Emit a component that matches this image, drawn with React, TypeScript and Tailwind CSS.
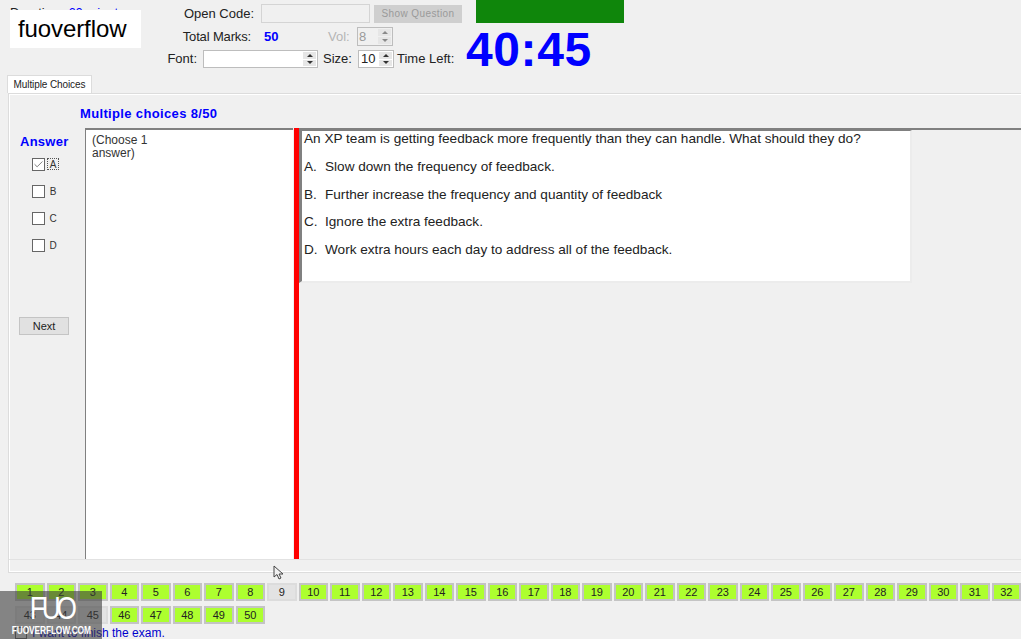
import { Check } from 'lucide-react';

const choices = [
    'Slow down the frequency of feedback.',
    'Further increase the frequency and quantity of feedback',
    'Ignore the extra feedback.',
    'Work extra hours each day to address all of the feedback.',
];

const firstRow = Array.from({ length: 32 }, (_, i) => i + 1);
const secondRow = [43, 44, 45, 46, 47, 48, 49, 50];
// questions not answered yet stay grey
const unanswered = [9, 43, 44, 45];

function Spinner({ disabled }: { disabled?: boolean }) {
    const arrow = disabled ? 'text-[#8a8a8a]' : 'text-[#333]';
    return (
        <div className="flex w-[15px] flex-col gap-px self-stretch p-px">
            <div className="flex flex-1 items-center justify-center bg-[#e6e6e6]">
                <div className={`h-0 w-0 border-x-[3px] border-b-[3px] border-x-transparent border-b-current ${arrow}`}></div>
            </div>
            <div className="flex flex-1 items-center justify-center bg-[#e6e6e6]">
                <div className={`h-0 w-0 border-x-[3px] border-t-[3px] border-x-transparent border-t-current ${arrow}`}></div>
            </div>
        </div>
    );
}

function QuestionButton({ n }: { n: number }) {
    const done = !unanswered.includes(n);
    return (
        <div className={`flex h-[18px] w-[29.5px] shrink-0 items-center justify-center border-2 text-[11px] text-[#222] ${done ? 'border-[#c4c4c4] bg-[#adff2f]' : 'border-[#dcdcdc] bg-[#e3e3e3]'}`}>
            {n}
        </div>
    );
}

export default function App() {
    return (
        <div className="relative flex h-[639px] w-[1021px] flex-col overflow-hidden bg-[#f0f0f0] font-['Liberation_Sans',Arial,sans-serif] text-[#222]">
            {/* header */}
            <div className="flex h-[75px] shrink-0">
                <div className="w-[167px] shrink-0 whitespace-nowrap pl-[10px] pt-[6px] text-[13px] leading-[14px]">
                    Duration: <span className="ml-[2px] text-[#0000ff]">60 minutes</span>
                </div>
                <div className="flex w-[299px] shrink-0 flex-col text-[13px]">
                    <div className="flex h-[24px] items-center pt-[3px]">
                        <div className="w-[87px] text-right">Open Code:</div>
                        <div className="ml-[7px] h-[19px] w-[109px] border border-[#d4d4d4] bg-[#f0f0f0]"></div>
                        <div className="ml-[4px] flex h-[18px] w-[88px] items-center justify-center bg-[#cfcfcf] text-[10px] tracking-[0.4px] text-[#9a9a9a]">Show Question</div>
                    </div>
                    <div className="flex h-[26px] items-center pb-[3px] pt-[2px]">
                        <div className="w-[84px] text-right tracking-[-0.15px]">Total Marks:</div>
                        <div className="ml-[13px] w-[64px] font-bold text-[#0000ff]">50</div>
                        <div className="w-[21px] text-[#b5b5b5]">Vol:</div>
                        <div className="ml-[8px] flex h-[19px] w-[36px] items-center justify-between border border-[#bdbdbd] pl-[1px] text-[#9a9a9a]">
                            8
                            <Spinner disabled />
                        </div>
                    </div>
                    <div className="flex h-[18px] items-center">
                        <div className="w-[30px] text-right">Font:</div>
                        <div className="ml-[6px] flex h-[18px] w-[115px] justify-end border border-[#bdbdbd] bg-white">
                            <Spinner />
                        </div>
                        <div className="ml-[5px] w-[27px]">Size:</div>
                        <div className="ml-[8px] flex h-[18px] w-[36px] items-center justify-between border border-[#bdbdbd] bg-white pl-[2px]">
                            10
                            <Spinner />
                        </div>
                        <div className="ml-[3px] whitespace-nowrap">Time Left:</div>
                    </div>
                </div>
                <div className="flex flex-col">
                    <div className="ml-[10px] h-[24px] w-[148px] bg-[#0f860b]"></div>
                    <div className="mt-[2px] text-[48px] font-bold leading-[50px] tracking-[0.6px] text-[#0000ff]">40:45</div>
                </div>
            </div>

            {/* tab */}
            <div className="ml-[7px] flex h-[18px] w-[85px] shrink-0 items-center justify-center border border-b-0 border-[#dcdcdc] bg-white text-[10px] tracking-[-0.1px] text-[#222]">
                Multiple Choices
            </div>

            {/* tab panel */}
            <div className="ml-[8px] flex h-[480px] shrink-0 flex-col border border-r-0 border-[#dcdcdc] shadow-[inset_1px_1px_0_#fff,inset_0_-1px_0_#fff]">
                <div className="h-[34px] shrink-0 pl-[71px] pt-[12px] text-[13px] font-bold leading-[16px] tracking-[0.35px] text-[#0000ff]">
                    Multiple choices 8/50
                </div>
                <div className="flex h-[432px] shrink-0 border-b border-[#e2e2e2]">
                    <div className="flex w-[76px] shrink-0 flex-col">
                        <div className="mt-[6px] pl-[11px] text-[13px] font-bold leading-[16px] tracking-[0.25px] text-[#0000ff]">Answer</div>
                        <div className="mt-[8px] flex flex-col gap-[15px] pl-[23px]">
                            {['A', 'B', 'C', 'D'].map((letter) => (
                                <div key={letter} className="flex h-[12px] items-center gap-[2px]">
                                    <div className="flex h-[13px] w-[13px] shrink-0 items-center justify-center border border-[#666] bg-white">
                                        {letter === 'A' && <Check size={11} strokeWidth={1.5} color="#444" />}
                                    </div>
                                    <div className={`flex h-[12px] w-[12px] items-center justify-center text-[10px] text-[#333] ${letter === 'A' ? 'border border-dotted border-[#555]' : ''}`}>
                                        {letter}
                                    </div>
                                </div>
                            ))}
                        </div>
                        <div className="ml-[10px] mt-[66px] flex h-[18px] w-[50px] items-center justify-center border border-[#c4c4c4] bg-[#e1e1e1] text-[11px]">
                            Next
                        </div>
                    </div>
                    <div className="w-[208px] shrink-0 border-l border-t-2 border-[#808080] bg-white pl-[6px] pt-[4px] text-[12px] leading-[13px] text-[#333]">
                        (Choose 1
                        <br />
                        answer)
                    </div>
                    <div className="ml-px w-[5px] shrink-0 bg-[#ff0000]"></div>
                    <div className="min-w-0 flex-1">
                        <div className="h-[2px] bg-[#808080]"></div>
                        <div className="flex h-[153px] w-[613px] flex-col border-b-2 border-l-[3px] border-r-2 border-t border-b-[#ececec] border-l-[#808080] border-r-[#ececec] border-t-[#808080] bg-white pl-[2px] text-[13.6px] leading-[16px] text-[#222]">
                            <div className="whitespace-nowrap">An XP team is getting feedback more frequently than they can handle. What should they do?</div>
                            {choices.map((text, i) => (
                                <div key={text} className="mt-[11.75px] flex whitespace-nowrap">
                                    <div className="w-[21px]">{'ABCD'[i]}.</div>
                                    {text}
                                </div>
                            ))}
                        </div>
                    </div>
                </div>
            </div>

            {/* question navigation */}
            <div className="mt-[10px] flex gap-[2px] pl-[15px]">
                {firstRow.map((n) => (
                    <QuestionButton key={n} n={n} />
                ))}
            </div>
            <div className="mt-[5px] flex gap-[2px] pl-[15px]">
                {secondRow.map((n) => (
                    <QuestionButton key={n} n={n} />
                ))}
            </div>
            <div className="mt-[2px] flex items-center gap-[5px] pl-[15px] text-[12px] leading-[14px] text-[#0000cd]">
                <div className="h-[12px] w-[12px] border border-[#666]"></div>
                I want to finish the exam.
            </div>

            {/* logo box over the header */}
            <div className="absolute left-[10px] top-[10px] flex h-[38px] w-[131px] items-center bg-white pl-[8px] text-[24px] tracking-[-0.1px] text-black">
                fuoverflow
            </div>

            {/* watermark */}
            <div className="absolute bottom-0 left-0 flex h-[48px] w-[102px] flex-col items-center bg-[#3c3c3c]/60 text-white">
                <div className="mt-[1px] scale-x-[0.82] text-[32px] leading-[32px] tracking-[-5px]">FUO</div>
                <div className="scale-x-[0.8] whitespace-nowrap text-[10.5px] font-bold leading-[12px] tracking-[-0.2px]">FUOVERFLOW.COM</div>
            </div>

            {/* mouse cursor */}
            <svg className="absolute left-[273px] top-[565px]" width="12" height="16" viewBox="0 0 12 16">
                <path d="M1 1 L1 12 L4 9.5 L6 14 L8 13 L6 9 L10 9 Z" fill="#f0f0f0" stroke="#444" strokeWidth="1" />
            </svg>
        </div>
    );
}
